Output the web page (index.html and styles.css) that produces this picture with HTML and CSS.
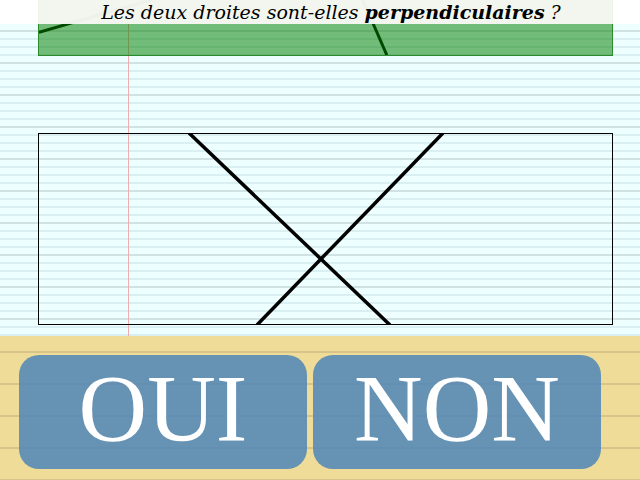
FILE: index.html
```html
<!DOCTYPE html>
<html lang="fr">
<head>
<meta charset="utf-8">
<title>Perpendiculaires</title>
<link rel="stylesheet" href="styles.css">
</head>
<body>
<div class="page">
  <section class="sheet">
    <div class="prev-figure">
      <svg class="fig-svg" viewBox="0 0 575 56" preserveAspectRatio="none">
        <line x1="0" y1="33" x2="112" y2="0" class="g-line"/>
        <line x1="325" y1="0" x2="349" y2="56" class="g-line"/>
      </svg>
    </div>
    <div class="figure">
      <svg class="fig-svg" viewBox="0 0 573 190" preserveAspectRatio="none">
        <line x1="150" y1="-1" x2="351" y2="191" class="b-line"/>
        <line x1="404" y1="-1" x2="218" y2="191" class="b-line"/>
      </svg>
    </div>
    <header class="question">Les deux droites sont-elles <strong>perpendiculaires</strong> ?</header>
  </section>
  <section class="answers">
    <button class="answer">OUI</button>
    <button class="answer">NON</button>
  </section>
</div>
</body>
</html>
```

FILE: styles.css
```css
html, body {
  margin: 0;
  padding: 0;
  background: #ffffff;
}

.page {
  width: 640px;
  height: 480px;
  display: flex;
  flex-direction: column;
  overflow: hidden;
}

.sheet {
  position: relative;
  height: 336px;
  flex: none;
  display: flex;
  flex-direction: column;
  padding: 0 27px 0 38px;
  background:
    linear-gradient(#ffffff, #ffffff) 0 0 / 100% 24px no-repeat,
    linear-gradient(to right, transparent 128px, #f0aeae 128px, #f0aeae 129px, transparent 129px),
    repeating-linear-gradient(to bottom, transparent 0, transparent 30px, #d0e2e2 30px, #d0e2e2 32px),
    repeating-linear-gradient(to bottom, transparent 0, transparent 6px, #d9eff1 6px, #d9eff1 8px),
    #eeffff;
}

.prev-figure {
  height: 55px;
  border: 1px solid #2b8a2b;
  border-top: none;
  background: rgba(0, 128, 0, 0.53);
  flex: none;
}

.figure {
  margin-top: 77px;
  height: 190px;
  border: 1px solid #000000;
  flex: none;
}

.fig-svg {
  display: block;
  width: 100%;
  height: 100%;
  overflow: hidden;
}

.g-line {
  stroke: #004a00;
  stroke-width: 3;
}

.b-line {
  stroke: #000000;
  stroke-width: 3.5;
}

.question {
  position: absolute;
  top: 0;
  left: 38px;
  width: 575px;
  height: 24px;
  background: rgba(247, 248, 242, 0.96);
  font-family: "DejaVu Serif", serif;
  font-style: italic;
  font-size: 19px;
  line-height: 25px;
  text-align: center;
  color: #000000;
  padding-left: 11px;
  box-sizing: border-box;
  white-space: nowrap;
}

.question strong {
  font-weight: bold;
}

.answers {
  flex: 1;
  display: flex;
  gap: 6px;
  padding: 19px 0 0 19px;
  background:
    repeating-linear-gradient(to bottom, transparent 0, transparent 15px, #d8c489 15px, #d8c489 17px, transparent 17px, transparent 32px),
    #eedc98;
}

.answer {
  width: 288px;
  height: 114px;
  border: none;
  border-radius: 20px;
  background: rgba(87, 138, 183, 0.9);
  color: #ffffff;
  font-family: "Liberation Serif", "Times New Roman", serif;
  font-size: 95px;
  line-height: 108px;
  padding: 0 0 6px;
  text-align: center;
}
```
